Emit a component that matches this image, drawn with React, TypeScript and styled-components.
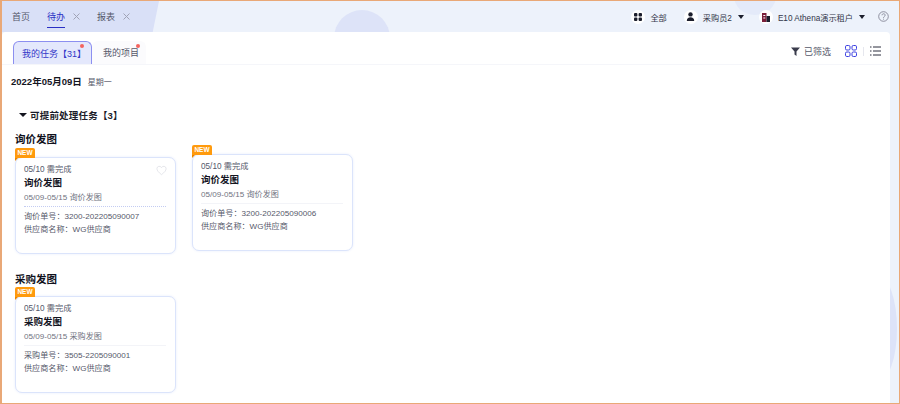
import styled, { createGlobalStyle } from 'styled-components';

const GlobalStyle = createGlobalStyle`
  html, body { margin: 0; padding: 0; }
  body { font-family: "Liberation Sans", "Noto Sans CJK SC", sans-serif; }
  * { box-sizing: border-box; }
`;

const Page = styled.div`
  position: relative;
  width: 900px;
  height: 404px;
  overflow: hidden;
  display: flex;
  flex-direction: column;
  background: #edf2fb;
  border: 1px solid #e9a877;
  border-left-width: 2px;
`;

const Blob = styled.div<{ $x: number; $y: number; $w: number; $h: number; $faint?: boolean }>`
  position: absolute;
  left: ${(p) => p.$x}px;
  top: ${(p) => p.$y}px;
  width: ${(p) => p.$w}px;
  height: ${(p) => p.$h}px;
  border-radius: 50%;
  background: ${(p) => (p.$faint ? '#e4eaf9' : '#dde3f8')};
`;

const TopBar = styled.header`
  position: relative;
  height: 31px;
  flex: none;
  display: flex;
  align-items: center;
  justify-content: space-between;
  padding-right: 10px;
`;

const NavTabs = styled.nav`
  height: 31px;
  width: 157px;
  padding-left: 10px;
  display: flex;
  align-items: center;
  gap: 17px;
  background: #d9e0f7;
  clip-path: polygon(0 0, 100% 0, 96% 100%, 0 100%);
`;

const NavTab = styled.div<{ $active?: boolean }>`
  position: relative;
  display: flex;
  align-items: center;
  gap: 8px;
  height: 31px;
  font-size: 9px;
  color: ${(p) => (p.$active ? '#2a2fc4' : '#55586a')};
`;

const NavLabel = styled.span<{ $active?: boolean }>`
  position: relative;
  &::after {
    content: '';
    display: ${(p) => (p.$active ? 'block' : 'none')};
    position: absolute;
    left: 0;
    right: 0;
    bottom: -5px;
    height: 1.5px;
    background: #2a2fc4;
  }
`;

const Close = styled.svg`
  width: 7px;
  height: 7px;
  stroke: #a0a3b6;
  stroke-width: 1;
  fill: none;
`;

const TopActions = styled.div`
  position: relative;
  display: flex;
  align-items: center;
  font-size: 8.2px;
  color: #33364a;
`;

const Action = styled.div<{ $gap: number }>`
  display: flex;
  align-items: center;
  gap: 5px;
  margin-right: ${(p) => p.$gap}px;
  white-space: nowrap;
`;

const IconDisc = styled.span`
  width: 14px;
  height: 14px;
  border-radius: 50%;
  background: #ffffff;
  display: flex;
  align-items: center;
  justify-content: center;
`;

const Caret = styled.span`
  width: 0;
  height: 0;
  margin-left: 1px;
  border-left: 3px solid transparent;
  border-right: 3px solid transparent;
  border-top: 4px solid #1c1e2c;
`;

const Panel = styled.main`
  position: relative;
  flex: 1;
  min-height: 0;
  margin-right: 9px;
  background: #ffffff;
  border-radius: 4px 4px 0 0;
  display: flex;
  flex-direction: column;
`;

const TabRow = styled.div`
  height: 33px;
  flex: none;
  display: flex;
  align-items: flex-end;
  justify-content: space-between;
  padding: 0 9px 0 11px;
  border-bottom: 1px solid #f5f6fa;
`;

const SubTabs = styled.div`
  display: flex;
`;

const SubTab = styled.div<{ $active?: boolean }>`
  position: relative;
  height: 23px;
  padding: ${(p) => (p.$active ? '0 0 0 8px' : '0 0 0 11px')};
  width: ${(p) => (p.$active ? '79px' : '54px')};
  display: flex;
  align-items: center;
  white-space: nowrap;
  font-size: 9px;
  color: ${(p) => (p.$active ? '#3337c8' : '#55586a')};
  background: ${(p) => (p.$active ? '#e4e8fc' : '#fbfbfd')};
  border-radius: 6px 6px 0 0;
  border: ${(p) => (p.$active ? '1px solid #8c8ff0' : 'none')};
  border-bottom: none;
  &::after {
    content: '';
    position: absolute;
    top: ${(p) => (p.$active ? '2px' : '3px')};
    right: ${(p) => (p.$active ? '7px' : '6px')};
    width: 4px;
    height: 4px;
    border-radius: 50%;
    background: #f4645f;
  }
`;

const ViewTools = styled.div`
  display: flex;
  align-items: center;
  height: 26px;
  font-size: 9px;
  color: #55586a;
`;

const FilterLabel = styled.span`
  display: flex;
  align-items: center;
  gap: 3px;
  margin-right: 14px;
`;

const ToolSep = styled.span`
  width: 1px;
  height: 9px;
  margin: 0 6px;
  background: #e6e7ee;
`;

const Body = styled.div`
  flex: 1;
  min-height: 0;
  overflow: hidden;
  padding: 9px 0 0 9px;
`;

const DateRow = styled.div`
  display: flex;
  align-items: center;
  gap: 6px;
  height: 14px;
`;

const DateText = styled.span`
  font-size: 9.5px;
  font-weight: 700;
  color: #14151f;
`;

const Weekday = styled.span`
  font-size: 8px;
  color: #55586a;
`;

const GroupHead = styled.div`
  display: flex;
  align-items: center;
  gap: 3px;
  height: 14px;
  margin: 20px 0 0 8px;
  font-size: 9.5px;
  font-weight: 700;
  color: #1c1d2a;
  letter-spacing: 0.2px;
`;

const GroupCaret = styled.span`
  width: 0;
  height: 0;
  border-left: 4px solid transparent;
  border-right: 4px solid transparent;
  border-top: 4px solid #14151f;
`;

const SectionTitle = styled.h3<{ $top: number }>`
  margin: ${(p) => p.$top}px 0 0 4px;
  height: 16px;
  line-height: 16px;
  font-size: 10.5px;
  font-weight: 700;
  color: #10111c;
`;

const CardRow = styled.div<{ $top: number }>`
  display: flex;
  align-items: flex-start;
  gap: 16px;
  margin: ${(p) => p.$top}px 0 0 4px;
`;

const Card = styled.article<{ $lift?: number }>`
  position: relative;
  width: 161px;
  height: 97px;
  margin-top: ${(p) => (p.$lift ? -p.$lift : 0)}px;
  padding: 6px 9px 0 8px;
  background: #fff;
  border: 1px solid #dbe4fb;
  border-radius: 7px;
  box-shadow: 0 0 3px #e9eefc;
`;

const NewBadge = styled.span`
  position: absolute;
  left: -1px;
  top: -10px;
  width: 20px;
  height: 10px;
  line-height: 10px;
  text-align: center;
  font-size: 6.5px;
  font-weight: 700;
  color: #fff;
  background: #ff9a0d;
  border-radius: 2px 2px 0 0;
  &::after {
    content: '';
    position: absolute;
    left: 0;
    top: 10px;
    border-top: 3px solid #e98400;
    border-right: 3px solid transparent;
  }
`;

const Due = styled.div`
  font-size: 8.2px;
  line-height: 11px;
  color: #55586a;
`;

const CardTitle = styled.div`
  margin-top: 1px;
  font-size: 9.5px;
  line-height: 14px;
  font-weight: 700;
  color: #14151f;
`;

const Range = styled.div`
  margin-top: 2px;
  font-size: 8.1px;
  line-height: 11px;
  color: #70737f;
`;

const Rule = styled.div<{ $dotted?: boolean }>`
  margin: 3px 0 3px;
  border-top: 1px ${(p) => (p.$dotted ? 'dotted #c3ccf2' : 'solid #f3f4f8')};
`;

const Info = styled.div`
  font-size: 8.1px;
  line-height: 13px;
  color: #55586a;
  white-space: nowrap;
`;

const Heart = styled.svg`
  position: absolute;
  top: 7px;
  right: 8px;
  width: 11px;
  height: 11px;
  fill: none;
  stroke: #dcdde3;
  stroke-width: 1.6;
`;

const closeIcon = (
  <Close viewBox="0 0 7 7">
    <path d="M.5.5l6 6M6.5.5l-6 6" />
  </Close>
);

type Task = { title: string; range: string; no: string; vendor: string; lift?: number; heart?: boolean; dotted?: boolean };

const TaskCard = ({ title, range, no, vendor, lift, heart, dotted }: Task) => (
  <Card $lift={lift}>
    <NewBadge>NEW</NewBadge>
    {heart && (
      <Heart viewBox="0 0 24 24">
        <path d="M12 21C5 15.5 2 12 2 8a5.2 5.2 0 0 1 10-2 5.2 5.2 0 0 1 10 2c0 4-3 7.500-10 13z" />
      </Heart>
    )}
    <Due>05/10 需完成</Due>
    <CardTitle>{title}</CardTitle>
    <Range>05/09-05/15 {range}</Range>
    <Rule $dotted={dotted} />
    <Info>{no}</Info>
    <Info>{vendor}</Info>
  </Card>
);

export default function App() {
  return (
    <>
      <GlobalStyle />
      <Page>
        <Blob $x={332} $y={9} $w={56} $h={56} />
        <Blob $x={732} $y={-24} $w={42} $h={38} $faint />
        <Blob $x={858} $y={275} $w={37} $h={105} />
        <TopBar>
          <NavTabs>
            <NavTab>
              <NavLabel>首页</NavLabel>
            </NavTab>
            <NavTab $active>
              <NavLabel $active>待办</NavLabel>
              {closeIcon}
            </NavTab>
            <NavTab>
              <NavLabel>报表</NavLabel>
              {closeIcon}
            </NavTab>
          </NavTabs>
          <TopActions>
            <Action $gap={17}>
              <IconDisc>
                <svg width="8" height="8" viewBox="0 0 8 8" fill="#1c1e2c">
                  <rect width="3.4" height="3.4" rx="1" />
                  <rect x="4.6" width="3.4" height="3.4" rx="1" />
                  <rect y="4.6" width="3.4" height="3.4" rx="1" />
                  <rect x="4.6" y="4.6" width="3.4" height="3.4" rx="1" />
                </svg>
              </IconDisc>
              全部
            </Action>
            <Action $gap={15}>
              <IconDisc>
                <svg width="9" height="9" viewBox="0 0 9 9" fill="#1c1e2c">
                  <circle cx="4.5" cy="2.4" r="2.2" />
                  <path d="M.8 9c0-2.600 1.500-3.800 3.700-3.800S8.200 6.400 8.200 9z" />
                </svg>
              </IconDisc>
              采购员2
              <Caret />
            </Action>
            <Action $gap={13}>
              <IconDisc>
                <svg width="10" height="10" viewBox="0 0 10 10">
                  <path d="M1 1h4.500v9H1z" fill="#7a1f3a" />
                  <path d="M5.500 4H9v6H5.500z" fill="#1c1e2c" />
                  <path d="M2.300 3h2v1h-2zM2.300 5.500h2v1h-2z" fill="#fff" />
                </svg>
              </IconDisc>
              E10 Athena演示租户
              <Caret />
            </Action>
            <svg width="11" height="11" viewBox="0 0 11 11" fill="none" stroke="#77798a" strokeWidth="0.8">
              <circle cx="5.5" cy="5.5" r="4.8" />
              <path d="M4 4.300c0-2 3.200-2 3.200-.1 0 1.200-1.700 1.200-1.700 2.600M5.500 7.700v.9" />
            </svg>
          </TopActions>
        </TopBar>
        <Panel>
          <TabRow>
            <SubTabs>
              <SubTab $active>我的任务【31】</SubTab>
              <SubTab>我的项目</SubTab>
            </SubTabs>
            <ViewTools>
              <FilterLabel>
                <svg width="11" height="11" viewBox="0 0 11 11">
                  <path d="M1 1.500h9L6.500 5.500V10L4.500 8.500v-3z" fill="#3a3c4c" />
                </svg>
                已筛选
              </FilterLabel>
              <svg width="12" height="12" viewBox="0 0 12 12" fill="none" stroke="#3a3ee0" strokeWidth="1">
                <rect x="0.5" y="0.5" width="4.5" height="4.5" rx="1.3" />
                <rect x="7" y="0.5" width="4.5" height="4.5" rx="1.3" />
                <rect x="0.5" y="7" width="4.5" height="4.5" rx="1.3" />
                <rect x="7" y="7" width="4.5" height="4.5" rx="1.3" />
              </svg>
              <ToolSep />
              <svg width="11" height="10" viewBox="0 0 11 10" fill="none" stroke="#2a2c3c" strokeWidth="1">
                <path d="M0 1h1.500M3 1h8M0 5h1.500M3 5h8M0 9h1.500M3 9h8" />
              </svg>
            </ViewTools>
          </TabRow>
          <Body>
            <DateRow>
              <DateText>2022年05月09日</DateText>
              <Weekday>星期一</Weekday>
            </DateRow>
            <GroupHead>
              <GroupCaret />
              可提前处理任务【3】
            </GroupHead>
            <SectionTitle $top={9}>询价发图</SectionTitle>
            <CardRow $top={10}>
              <TaskCard
                title="询价发图"
                range="询价发图"
                no="询价单号：3200-202205090007"
                vendor="供应商名称：WG供应商"
                heart
                dotted
              />
              <TaskCard
                title="询价发图"
                range="询价发图"
                no="询价单号：3200-202205090006"
                vendor="供应商名称：WG供应商"
                lift={3}
              />
            </CardRow>
            <SectionTitle $top={17}>采购发图</SectionTitle>
            <CardRow $top={9}>
              <TaskCard
                title="采购发图"
                range="采购发图"
                no="采购单号：3505-2205090001"
                vendor="供应商名称：WG供应商"
              />
            </CardRow>
          </Body>
        </Panel>
      </Page>
    </>
  );
}
